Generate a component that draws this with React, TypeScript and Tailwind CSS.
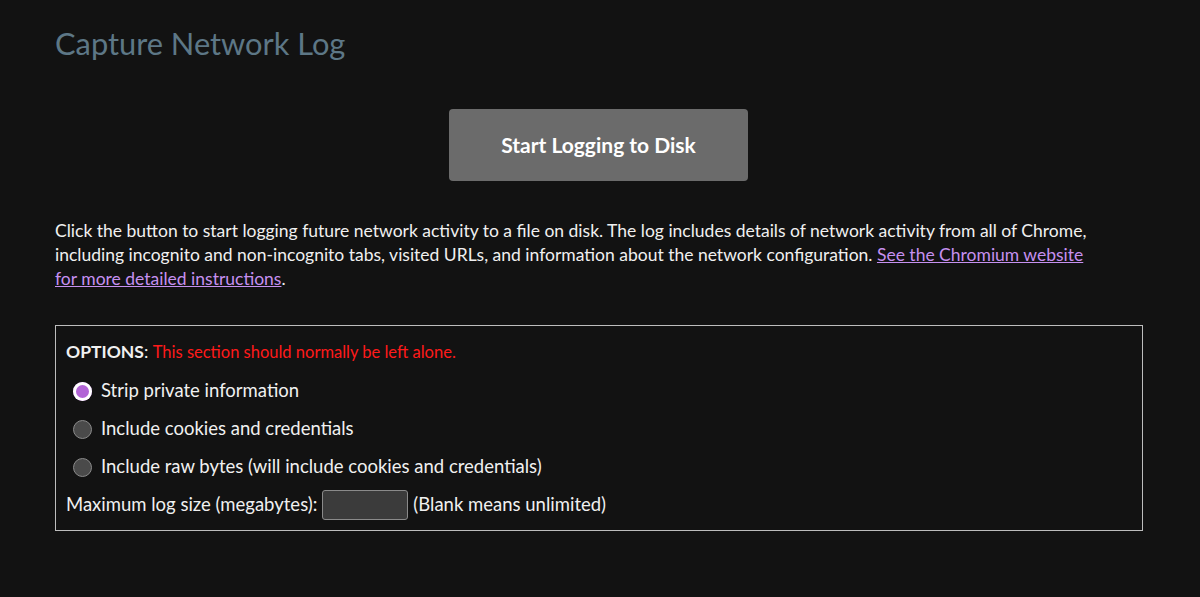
export default function App() {
  return (
    <div className="min-h-[597px] w-full bg-[#121212] px-[55px] pt-[23px] font-['Lato','Noto_Sans',sans-serif] text-[#f0f0f0]">
      {/* Title */}
      <h1 className="text-[30.8px] leading-[42px] font-normal text-[#5d7786]">Capture Network Log</h1>

      {/* Start button */}
      <div className="mt-[44px] flex justify-center">
        <button className="-ml-[3px] h-[72px] w-[299px] rounded-[4px] bg-[#6b6b6b] text-[21px] font-bold text-white">
          Start Logging to Disk
        </button>
      </div>

      {/* Description */}
      <p className="mt-[38px] text-[17.5px] leading-[24px]">
        Click the button to start logging future network activity to a file on disk. The log includes details of network
        activity from all of Chrome, including incognito and non-incognito tabs, visited URLs, and information about the
        network configuration.{' '}
        <a href="#" className="text-[#c690f0] underline">
          See the Chromium website
          <br />
          for more detailed instructions
        </a>
        .
      </p>

      {/* Options */}
      <fieldset className="mt-[34px] w-[1088px] border border-[#bdbdbd] px-[10px] pt-[14px] pb-[6px]">
        <div className="text-[17.5px] leading-[24px]">
          <span className="font-bold">OPTIONS</span>:{' '}
          <span className="text-[16.5px] text-[#ff1a1a]">This section should normally be left alone.</span>
        </div>
        <div className="mt-[8px] flex flex-col text-[18.5px]">
          <label className="flex h-[38px] items-center gap-[9px] pl-[7px]">
            <span className="size-[19px] rounded-full bg-[#b264d6] ring-[3px] ring-white ring-inset"></span>
            Strip private information
          </label>
          <label className="flex h-[38px] items-center gap-[9px] pl-[7px]">
            <span className="size-[19px] rounded-full border border-[#8a8a8a] bg-[#4a4a4a]"></span>
            Include cookies and credentials
          </label>
          <label className="flex h-[38px] items-center gap-[9px] pl-[7px]">
            <span className="size-[19px] rounded-full border border-[#8a8a8a] bg-[#4a4a4a]"></span>
            Include raw bytes (will include cookies and credentials)
          </label>
          <div className="flex h-[38px] items-center">
            <span>Maximum log size (megabytes):</span>
            <input className="mx-[5px] h-[30px] w-[86px] rounded-[3px] border border-[#8a8a8a] bg-[#3b3b3b]" />
            <span>(Blank means unlimited)</span>
          </div>
        </div>
      </fieldset>
    </div>
  );
}
